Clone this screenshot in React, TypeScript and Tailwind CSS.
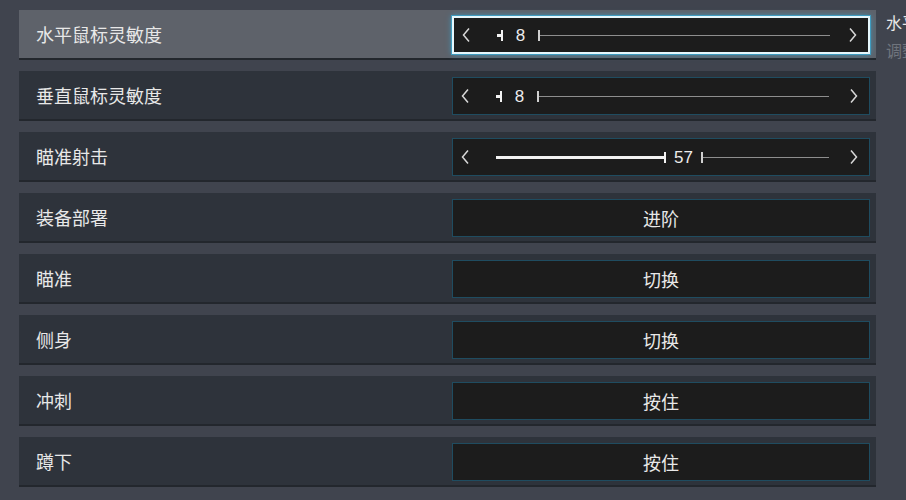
import React from "react"

type Row =
  | { label: string; kind: "slider"; value: number; fill: number }
  | { label: string; kind: "button"; text: string }

const rows: Row[] = [
  { label: "水平鼠标灵敏度", kind: "slider", value: 8, fill: 5 },
  { label: "垂直鼠标灵敏度", kind: "slider", value: 8, fill: 5 },
  { label: "瞄准射击", kind: "slider", value: 57, fill: 169 },
  { label: "装备部署", kind: "button", text: "进阶" },
  { label: "瞄准", kind: "button", text: "切换" },
  { label: "侧身", kind: "button", text: "切换" },
  { label: "冲刺", kind: "button", text: "按住" },
  { label: "蹲下", kind: "button", text: "按住" },
]

function Chevron({ dir }: { dir: "left" | "right" }) {
  return (
    <svg width="8" height="16" viewBox="0 0 8 16" className="shrink-0">
      <polyline
        points={dir === "left" ? "7,1.5 1.5,8 7,14.5" : "1,1.5 6.5,8 1,14.5"}
        fill="none"
        stroke="#d8d8d8"
        strokeWidth="1.5"
      />
    </svg>
  )
}

function Slider({ value, fill }: { value: number; fill: number }) {
  return (
    <div className="flex items-center h-full pl-[8px] pr-[11px]">
      <Chevron dir="left" />
      <div className="flex items-center w-[333px] ml-[27px]">
        <div className="h-[3px] bg-[#f2f2f2]" style={{ width: fill - 1 }} />
        <div className="w-[2px] h-[11px] bg-[#f2f2f2]" />
        <div className="w-[35px] text-center text-[17px] leading-none text-[#ececec] font-['Liberation_Sans',sans-serif]">
          {value}
        </div>
        <div className="w-[2px] h-[11px] bg-[#d0d0d0]" />
        <div className="flex-1 h-[1px] bg-[#8e8e8e]" />
      </div>
      <div className="flex-1" />
      <Chevron dir="right" />
    </div>
  )
}

export default function App() {
  return (
    <div className="w-[906px] h-[500px] bg-[#40444e] overflow-hidden flex font-['Noto_Sans_CJK_SC','Noto_Sans',sans-serif]">
      <div className="w-[857px] ml-[19px] pt-[10px] flex flex-col gap-[11px] shrink-0">
        {rows.map((row, i) => {
          const selected = i === 0
          return (
            <div
              key={i}
              className={`h-[50px] flex items-center border-b-2 border-[#23272d] ${selected ? "bg-[#5e626a]" : "bg-[#2e333b]"}`}
            >
              <span className="pl-[17px] text-[18px] leading-none text-[#e8e8e8]">{row.label}</span>
              <div
                className={`ml-auto mr-[6px] mt-[2px] w-[418px] h-[38px] bg-[#1c1c1c] ${
                  selected
                    ? "border-2 border-[#e6f7fc] shadow-[0_0_0_1px_#3f9cc0,0_0_6px_#3f9cc0]"
                    : "border border-[#1f4c60]"
                }`}
              >
                {row.kind === "slider" ? (
                  <Slider value={row.value} fill={row.fill} />
                ) : (
                  <div className="h-full flex items-center justify-center text-[18px] leading-none text-[#e8e8e8]">
                    {row.text}
                  </div>
                )}
              </div>
            </div>
          )
        })}
      </div>
      <div className="ml-[10px] pt-[10px] min-w-0 flex-1 overflow-hidden whitespace-nowrap">
        <div className="text-[16px] text-[#e8e8e8] leading-[24px]">水平鼠标灵敏度</div>
        <div className="mt-[4px] text-[16px] text-[#6f747d] leading-[24px]">调整水平方向鼠标的灵敏度</div>
      </div>
    </div>
  )
}
